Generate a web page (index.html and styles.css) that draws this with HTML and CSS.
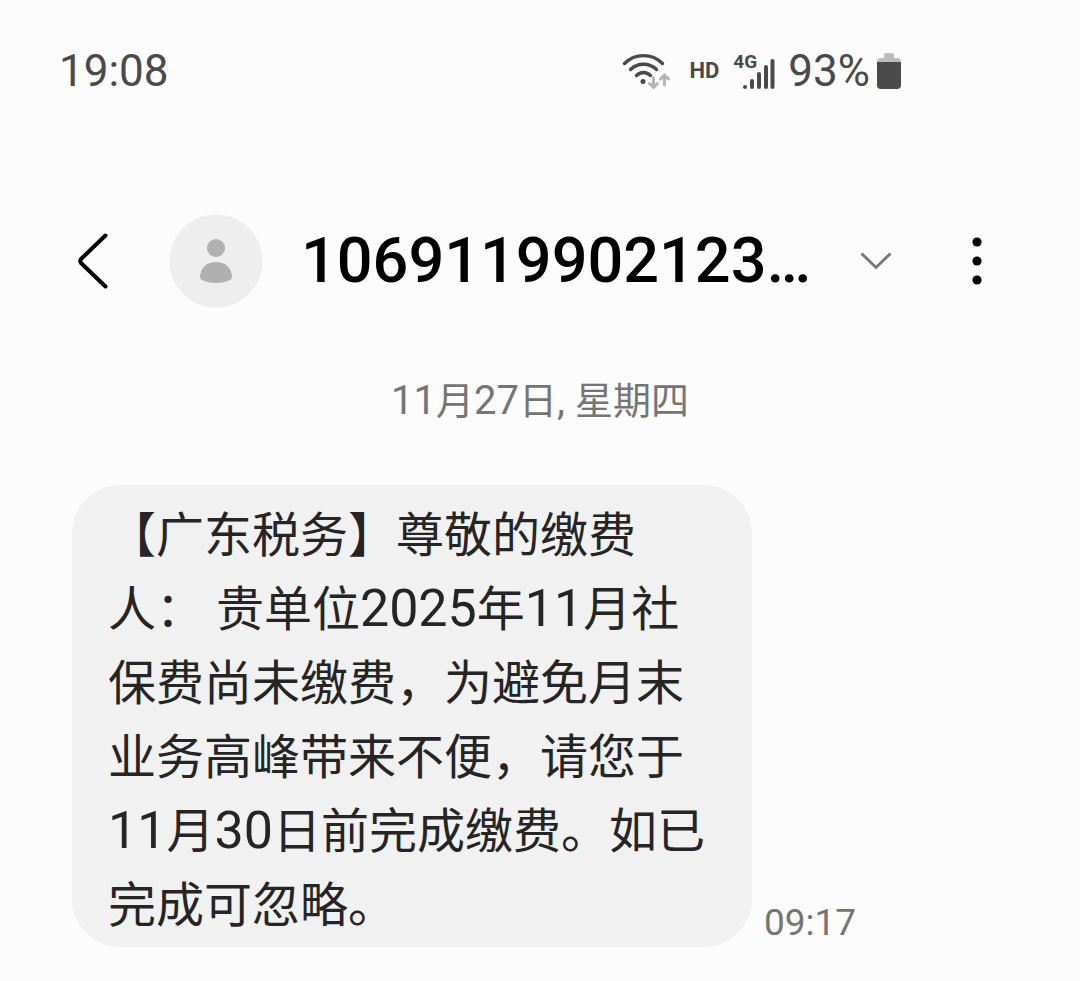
FILE: index.html
```html
<!DOCTYPE html>
<html lang="zh-CN">
<head>
  <meta charset="UTF-8">
  <meta name="viewport" content="width=device-width, initial-scale=1.0">
  <title>1069119902123</title>
  <link rel="stylesheet" href="styles.css">
</head>
<body>
  <!-- 状态栏 -->
  <div class="status-bar">
    <span class="clock">19:08</span>
    <div class="status-icons">
      <svg class="wifi" width="50" height="40" viewBox="0 0 50 40" fill="none" stroke="#4a4a4a" stroke-width="3.4" stroke-linecap="round">
        <path d="M2.5 12.5C13 2 30 2 40.5 12.5"/>
        <path d="M8.5 18.5C15.5 11.5 27.5 11.5 34.5 18.5"/>
        <path d="M14.5 24.5C18.5 20.5 24.5 20.5 28.5 24.5"/>
        <circle cx="21" cy="30.5" r="2.5" fill="#4a4a4a" stroke="none"/>
        <path stroke="#b4b4b4" stroke-width="3" d="M31.5 27V36M27.5 32.5L31.5 36.5L35.5 32.5M42.5 34V24M38.5 28L42.5 24L46.5 28"/>
      </svg>
      <span class="hd">HD</span>
      <div class="signal">
        <span class="network">4G</span>
        <svg width="34" height="38" viewBox="0 0 34 38" stroke="#4a4a4a" stroke-width="4" stroke-linecap="round">
          <path d="M4 35V35M11 29V35M18 22V35M25 15V35M31.5 9V35"/>
        </svg>
      </div>
      <span class="percent">93%</span>
      <svg class="battery" width="24" height="36" viewBox="0 0 24 36">
        <path fill="#bdbdbd" d="M7 5V2Q7 0 9 0H15Q17 0 17 2V5H20Q24 5 24 9V10H0V9Q0 5 4 5Z"/>
        <path fill="#4a4a4a" d="M0 9H24V32Q24 36 20 36H4Q0 36 0 32Z"/>
      </svg>
    </div>
  </div>

  <!-- 联系人 -->
  <header class="header">
    <button class="back" type="button" aria-label="返回">
      <svg width="32" height="56" viewBox="0 0 32 56" fill="none" stroke="#000" stroke-width="4" stroke-linecap="round" stroke-linejoin="round">
        <path d="M28.5 2.5L4 26Q2.5 28 4 30L28.5 53.5"/>
      </svg>
    </button>
    <svg class="avatar" width="94" height="94" viewBox="0 0 94 94">
      <circle cx="47" cy="47" r="46.5" fill="#eee"/>
      <circle cx="47" cy="34" r="9" fill="#b0b0b0"/>
      <path fill="#b0b0b0" d="M31 63C31 54 38 48 47 48S63 54 63 63Q63 65 61 66Q55 69 47 69T33 66Q31 65 31 63Z"/>
    </svg>
    <h1>1069119902123…</h1>
    <button class="expand" type="button" aria-label="展开">
      <svg width="32" height="20" viewBox="0 0 32 20" fill="none" stroke="#7a7a7a" stroke-width="3">
        <path d="M1.5 2.5L16 16.5L30.5 2.5"/>
      </svg>
    </button>
    <button class="more" type="button" aria-label="更多">
      <svg width="10" height="48" viewBox="0 0 10 48">
        <circle cx="5" cy="5" r="4.6"/>
        <circle cx="5" cy="24" r="4.6"/>
        <circle cx="5" cy="43" r="4.6"/>
      </svg>
    </button>
  </header>

  <!-- 短信内容 -->
  <main>
    <p class="date"><span>11</span>月<span>27</span>日<span>, </span>星期四</p>
    <div class="message">
      <p class="bubble">【广东税务】尊敬的缴费人： 贵单位<span>2025</span>年<span>11</span>月社保费尚未缴费，为避免月末业务高峰带来不便，请您于<span>11</span>月<span>30</span>日前完成缴费。如已完成可忽略。</p>
      <time class="time">09:17</time>
    </div>
  </main>
</body>
</html>
```

FILE: styles.css
```css
* {
  box-sizing: border-box;
}
body {
  margin: 0;
  background-color: #fcfcfc;
  font-family: Roboto, "Noto Sans CJK SC", sans-serif;
  color: #252525;
}
svg {
  display: block;
  flex-shrink: 0;
}
h1,
p {
  margin: 0;
}
button {
  padding: 0;
  border: none;
  background: none;
  cursor: pointer;
}

/* 状态栏 */
.status-bar {
  display: flex;
  justify-content: space-between;
  align-items: center;
  padding: 44px 179px 0 59px;
  font-size: 44px;
  line-height: 54px;
  color: #4a4a4a;
}
.status-icons {
  display: flex;
  align-items: center;
}
.hd {
  margin-left: 17px;
  font-size: 22px;
  font-weight: bold;
}
.signal {
  position: relative;
  margin-left: 22px;
}
.network {
  position: absolute;
  top: 1px;
  left: -8px;
  font-size: 19px;
  font-weight: bold;
  line-height: 18px;
}
.percent {
  margin-left: 13px;
}
.battery {
  margin-left: 7px;
}

/* 顶部联系人 */
.header {
  display: flex;
  align-items: center;
  padding: 116px 98px 0 77px;
}
.avatar {
  margin-left: 60px;
}
h1 {
  flex: 1;
  margin-left: 38px;
  font-size: 63px;
  font-weight: 500;
  line-height: 80px;
  color: #000;
  white-space: nowrap;
}
.expand {
  margin-left: 40px;
}
.more {
  margin-left: 80px;
}

/* 短信 */
.date {
  margin-top: 64px;
  text-align: center;
  font-size: 38px;
  line-height: 58px;
  color: #757575;
}
.date span {
  font-size: 40px;
  line-height: 1;
}
.message {
  display: flex;
  align-items: flex-end;
  gap: 12px;
  margin-top: 55px;
  padding: 0 72px;
}
.bubble {
  flex: 0 1 680px;
  padding: 14px 36px 4px;
  border-radius: 48px;
  background-color: #f1f1f1;
  font-size: 48px;
  line-height: 74px;
}
.bubble span {
  font-size: 52px;
  line-height: 1;
}
.time {
  font-size: 37px;
  line-height: 48px;
  color: #757575;
}
```
